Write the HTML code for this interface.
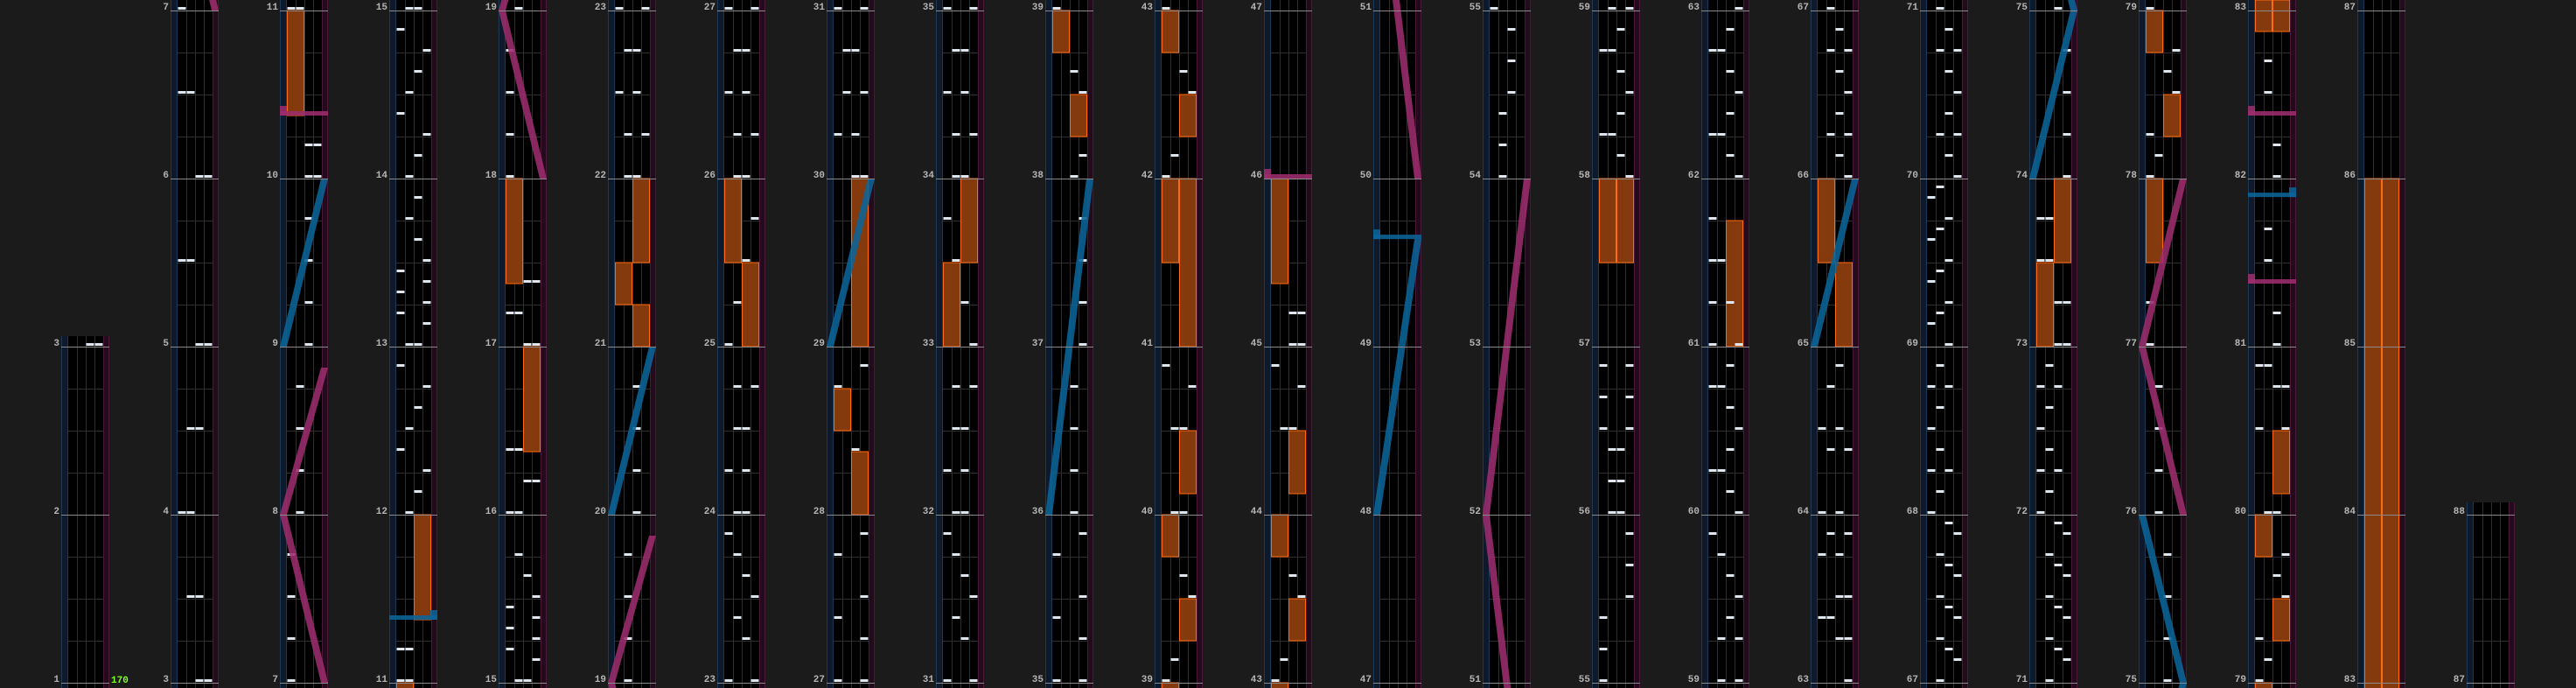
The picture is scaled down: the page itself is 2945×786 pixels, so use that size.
<!DOCTYPE html>
<html><head><meta charset="utf-8">
<style>
html,body{margin:0;padding:0;background:#1b1b1b;width:2945px;height:786px;overflow:hidden}
svg{display:block}
text{font-family:"Liberation Mono","DejaVu Sans Mono",monospace;font-weight:bold;font-size:11px}
</style></head>
<body>
<svg id="s" xmlns="http://www.w3.org/2000/svg" width="2945" height="786" viewBox="0 0 2945 786">
<rect width="2945" height="786" fill="#1b1b1b"/>
</svg>
<script>
(function(){
var NS="http://www.w3.org/2000/svg";
var S=document.getElementById("s");
var M="#9c2c6d",B="#0b6498";
var C=[[3,"23"],[3.5,"12"],[4,"01"],[4.5,"12"],[5,"23"],[5.5,"01"],[6,"23"],[6.5,"01"],[7,"0"],
[7.25,"0"],[7.5,"0"],[7.75,"0"],[8,"1"],[8.25,"1"],[8.5,"1"],[8.75,"1"],[9,"2"],[9.25,"2"],[9.5,"2"],[9.75,"2"],[10,"23"],[10.1875,"23"],[11,"01"],
[11.1875,"01"],[12,"1"],[12.125,"2"],[12.25,"3"],[12.375,"0"],[12.5,"1"],[12.625,"2"],[12.75,"3"],[12.875,"0"],[13,"12"],[13.125,"3"],[13.25,"3"],[13.375,"3"],[13.5,"3"],[13.1875,"0"],[13.3125,"0"],[13.4375,"0"],[13.625,"2"],[13.75,"1"],[13.875,"2"],[14,"1"],[14.125,"2"],[14.25,"3"],[14.375,"0"],[14.5,"1"],[14.625,"2"],[14.75,"3"],[14.875,"0"],[15,"12"],
[15.1875,"0"],[15.3125,"0"],[15.4375,"0"],[15.5,"3"],[15.375,"3"],[15.25,"3"],[15.125,"3"],[15.625,"2"],[15.75,"1"],[16,"01"],[16.1875,"23"],[16.375,"01"],[17,"23"],[17.1875,"01"],[17.375,"23"],[18,"0"],[18.25,"0"],[18.5,"0"],[18.75,"0"],[19,"1"],
[19.25,"1"],[19.5,"1"],[19.75,"1"],[20,"2"],[20.25,"2"],[20.5,"2"],[20.75,"2"],[22,"12"],[22.25,"13"],[22.5,"02"],[22.75,"12"],[23,"03"],
[23.25,"2"],[23.375,"1"],[23.5,"3"],[23.625,"2"],[23.75,"1"],[23.875,"0"],[24,"12"],[24.25,"02"],[24.5,"12"],[24.75,"13"],[25,"0"],[25.25,"1"],[25.5,"2"],[25.75,"3"],[26,"12"],[26.25,"13"],[26.5,"02"],[26.75,"12"],[27,"03"],
[27.25,"3"],[27.375,"0"],[27.5,"3"],[27.75,"0"],[27.875,"3"],[28.375,"2"],[28.75,"0"],[28.875,"3"],[30,"23"],[30.25,"02"],[30.5,"13"],[30.75,"12"],[31,"03"],
[31.25,"2"],[31.375,"1"],[31.5,"3"],[31.625,"2"],[31.75,"1"],[31.875,"0"],[32,"12"],[32.25,"02"],[32.5,"12"],[32.75,"13"],[33,"3"],[33.25,"2"],[33.5,"1"],[33.75,"0"],[34,"12"],[34.25,"13"],[34.5,"02"],[34.75,"12"],[35,"03"],
[35.25,"3"],[35.375,"0"],[35.5,"3"],[35.75,"0"],[35.875,"3"],[36,"2"],[36.25,"2"],[36.5,"2"],[36.75,"2"],[37,"3"],[37.25,"3"],[37.5,"3"],[37.75,"3"],[38,"2"],[38.125,"3"],[38.5,"3"],[38.625,"2"],[39,"0"],
[39.125,"1"],[39.5,"3"],[39.625,"2"],[40,"12"],[40.5,"12"],[40.75,"3"],[40.875,"0"],[42,"0"],[42.125,"1"],[42.5,"3"],[42.625,"2"],[43,"0"],
[43.125,"1"],[43.5,"3"],[43.625,"2"],[44.5,"12"],[44.75,"3"],[44.875,"0"],[45,"23"],[45.1875,"23"],
[54,"1"],[54.1875,"1"],[54.375,"1"],[54.5,"2"],[54.6875,"2"],[54.875,"2"],[55,"0"],
[55.1875,"0"],[55.375,"0"],[55.5,"3"],[55.6875,"3"],[55.875,"3"],[56,"12"],[56.1875,"12"],[56.375,"12"],[56.5,"03"],[56.6875,"03"],[56.875,"03"],[58,"3"],[58.125,"2"],[58.25,"01"],[58.375,"2"],[58.5,"3"],[58.625,"2"],[58.75,"01"],[58.875,"2"],[59,"13"],
[59.25,"13"],[59.375,"2"],[59.5,"3"],[59.625,"2"],[59.75,"1"],[59.875,"0"],[60,"3"],[60.125,"2"],[60.25,"01"],[60.375,"2"],[60.5,"3"],[60.625,"2"],[60.75,"01"],[60.875,"2"],[61,"03"],[61.25,"02"],[61.5,"01"],[61.75,"0"],[62,"3"],[62.125,"2"],[62.25,"01"],[62.375,"2"],[62.5,"3"],[62.625,"2"],[62.75,"01"],[62.875,"2"],[63,"3"],
[63.25,"23"],[63.375,"01"],[63.5,"23"],[63.75,"02"],[63.875,"13"],[64,"02"],[64.375,"13"],[64.5,"02"],[64.75,"1"],[64.875,"2"],[66,"3"],[66.125,"2"],[66.25,"13"],[66.375,"2"],[66.5,"3"],[66.625,"2"],[66.75,"13"],[66.875,"2"],[67,"1"],
[73,"23"],[73.25,"23"],[73.5,"01"],[73.75,"01"],[74,"3"],[74.25,"3"],[74.5,"3"],[74.75,"3"],[75,"2"],
[75.25,"2"],[75.5,"2"],[75.75,"2"],[76,"1"],[76.25,"1"],[76.5,"1"],[76.75,"1"],[77,"0"],[77.25,"0"],[78,"0"],[78.125,"1"],[78.25,"0"],[78.5,"3"],[78.625,"2"],[78.75,"3"],[79,"0"],
[79.125,"1"],[79.25,"0"],[79.5,"3"],[79.625,"2"],[79.75,"3"],[80,"12"],[80.5,"03"],[80.75,"23"],[80.875,"01"],[81,"2"],[81.1875,"2"],[81.5,"1"],[81.6875,"1"],[82,"2"],[82.1875,"2"],[82.5,"1"],[82.6875,"1"]];
[67,71].forEach(function(b){for(var q=0;q<4;q++){var t=b+q*0.25;C.push([t,"1"]);C.push([t+0.125,"3"]);C.push([t+0.1875,"2"]);}});
[69].forEach(function(b){for(var q=0;q<4;q++){var t=b+q*0.25;C.push([t,"2"]);C.push([t+0.125,"0"]);C.push([t+0.1875,"1"]);}});
[68,72].forEach(function(b){for(var q=0;q<4;q++){var t=b+q*0.25;C.push([t,q%2?"02":"0"]);C.push([t+0.125,"1"]);}});
[70].forEach(function(b){var a=[[0,"3"],[.125,"2"],[.25,"13"],[.375,"2"],[.5,"3"],[.625,"2"],[.75,"13"],[.875,"2"]];a.forEach(function(e){C.push([b+e[0],e[1]]);});});
var H=[[10.375,11,0],[11.375,12,1],[16.375,17,1],[17.375,18,0],[21,21.25,1],[21.25,21.5,0],[21.5,22,1],[25,25.5,1],[25.5,26,0],[28,28.375,1],[28.5,28.75,0],[29,30,1],[33,33.5,0],[33.5,34,1],[38.25,38.5,1],[38.75,39,0],[39.25,39.5,1],[39.75,40,0],[40.125,40.5,1],[41,42,1],[41.5,42,0],[42.25,42.5,1],[42.75,43,0],[43.25,43.5,1],[43.75,44,0],[44.125,44.5,1],[45.375,46,0],[57.5,58,0],[57.5,58,1],[61,61.75,1],[65,65.5,1],[65.5,66,0],[73,73.5,0],[73.5,74,1],[77.5,78,0],[78.25,78.5,1],[78.75,79,0],[79.25,79.5,1],[79.75,80,0],[80.125,80.5,1],[82.875,86,0],[82.875,86,1]];
var L=[[M,[[7,1],[8,0],[8.875,1]]],[B,[[9,0],[10,1]]],[M,[[18,1],[19,0],[19.875,1]]],[B,[[20,0],[21,1]]],[B,[[29,0],[30,1]]],[B,[[36,0],[38,1]]],[B,[[48,0],[49.64,1]]],[M,[[50,1],[52,0],[54,1]]],[B,[[65,0],[66,1]]],[B,[[74,0],[75,1],[76,0]]],[M,[[76,1],[77,0],[78,1]]]];
var SL=[[10.375,M,0],[11.375,B,1],[46,M,0],[49.64,B,0],[81.375,M,0],[81.89,B,1],[82.375,M,0]];
function el(n,a,p){var e=document.createElementNS(NS,n);for(var k in a)e.setAttribute(k,a[k]);(p||S).appendChild(e);return e;}
function col(k){
  var X=70+125*k, base=k==0?1:4*k-1, tp=k==0?384:(k==22?574:0);
  var last=k==0?3:(k==22?88:base+4);
  var tmax=base+(780-tp)/192, tmin=base-6/192;
  var g=el("g",{transform:"translate("+X+",0)"});
  function Y(t){return 780-(t-base)*192;}
  var h0=786-tp;
  el("rect",{x:0,y:tp,width:55,height:h0,fill:"#000"},g);
  el("rect",{x:0,y:tp,width:8,height:h0,fill:"#0e1a2b"},g);
  el("rect",{x:48,y:tp,width:7,height:h0,fill:"#240b1b"},g);
  el("rect",{x:0,y:tp,width:1,height:h0,fill:"#1c3a56"},g);
  el("rect",{x:7,y:tp,width:1,height:h0,fill:"#1c3a56"},g);
  el("rect",{x:48,y:tp,width:1,height:h0,fill:"#4a1838"},g);
  el("rect",{x:54,y:tp,width:1,height:h0,fill:"#4a1838"},g);
  [18,28,38].forEach(function(x){el("rect",{x:x,y:tp,width:1,height:h0,fill:"#2e2e2e"},g);});
  for(var y=780;y>=tp;y-=48){el("rect",{x:8,y:y,width:40,height:1,fill:"#2e2e2e"},g);}
  H.forEach(function(h){if(h[1]<tmin||h[0]>tmax)return;var y1=Math.max(Y(h[1]),tp),y2=Y(h[0]);var x=h[2]?28:8;
    el("rect",{x:x+0.5,y:y1,width:19,height:y2-y1,fill:"#853a0d",stroke:"#ff6a10","stroke-width":1},g);});
  C.forEach(function(c){if(c[0]<tmin||c[0]>tmax)return;var y=Y(c[0]);for(var i=0;i<c[1].length;i++){var ln=+c[1][i];
    el("rect",{x:8+10*ln+0.5,y:y-4,width:9,height:3,fill:"#dfe6ee"},g);}});
  L.forEach(function(l){var p=l[1];for(var i=0;i<p.length-1;i++){var a=p[i],b=p[i+1];if(b[0]<tmin||a[0]>tmax)continue;
    var x1=47*a[1],x2=47*b[1],y1=Y(a[0]),y2=Y(b[0]);
    el("polygon",{points:x1+","+y1+" "+(x1+8)+","+y1+" "+(x2+8)+","+y2+" "+x2+","+y2,fill:l[0],opacity:0.88},g);}});
  SL.forEach(function(s){if(s[0]<tmin||s[0]>tmax)return;var y=Y(s[0]);
    el("rect",{x:0,y:y-5,width:55,height:5,fill:s[1],opacity:0.88},g);
    el("rect",{x:s[2]?47:0,y:y-11,width:8,height:11,fill:s[1],opacity:0.88},g);});
  for(var m=base;m<=last;m++){var y=780-(m-base)*192;
    el("rect",{x:X,y:y,width:55,height:1,fill:"#8a8a8a"});
    var t=el("text",{x:X-2,y:y-1,"text-anchor":"end",fill:"#b4b4b4"});t.textContent=m;}
}
for(var k=0;k<23;k++)col(k);
var bt=el("text",{x:127,y:780,fill:"#7dff1a"});bt.textContent="170";
})();
</script>
</body></html>
